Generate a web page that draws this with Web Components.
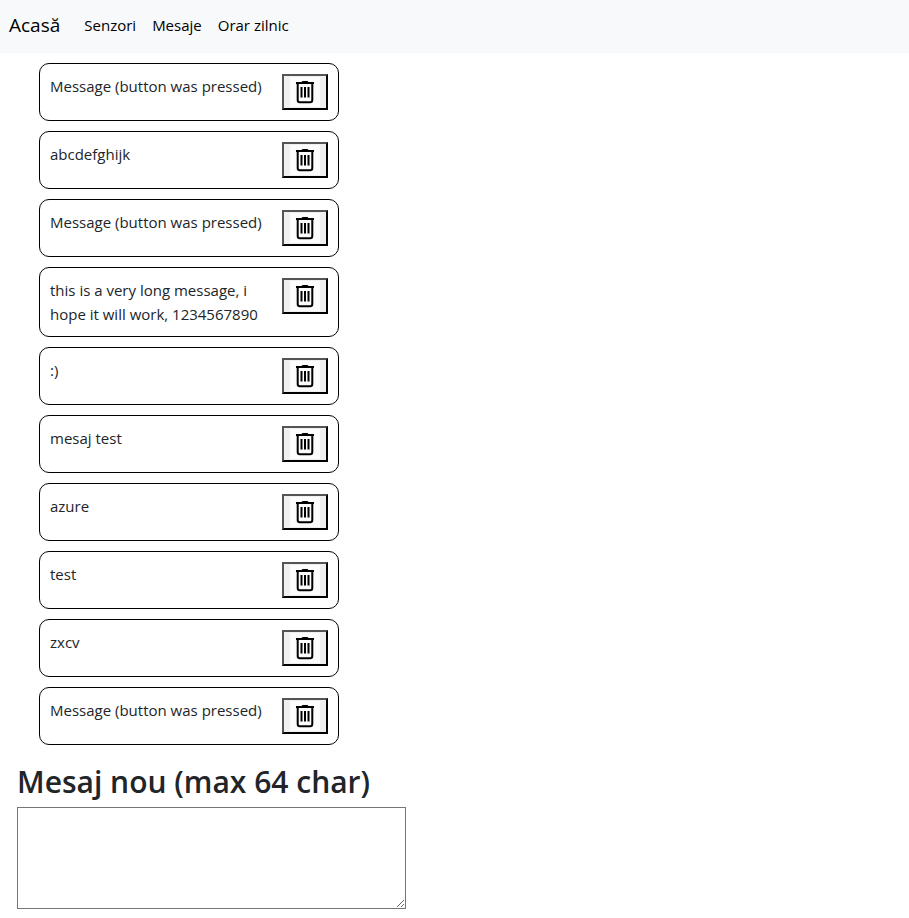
<!DOCTYPE html>
<html lang="ro">
<head>
<meta charset="utf-8">
<meta name="viewport" content="width=device-width, initial-scale=1">
<title>Mesaje</title>
<style>
body{margin:0;background:#fff;color:#212529;font:15px/24px "Segoe UI","Open Sans","Noto Sans",sans-serif}
</style>
</head>
<body>
<message-page></message-page>

<template id="nav-template">
<style>
:host{display:block;background:#f8f9fa}
nav{display:flex;align-items:center;min-height:53px;padding:0 9px 3px;box-sizing:border-box;gap:16px}
::slotted(a){color:#000;text-decoration:none}
::slotted(a[slot=brand]){font-size:19px;line-height:30px;margin-right:8px}
</style>
<nav><slot name="brand"></slot><slot></slot></nav>
</template>

<template id="item-template">
<style>
:host{display:flex;justify-content:space-between;align-items:flex-start;gap:8px;box-sizing:border-box;width:100%;max-width:300px;padding:10px;border:1px solid #000;border-radius:10px}
p{margin:0;flex:1;min-width:0}
button{flex:none;box-sizing:border-box;padding:1px 6px;border:2px outset #000;border-radius:0;background:#efefef;color:#000;font:inherit}
svg{display:block;width:30px;height:30px;background:#fcfcfc}
</style>
<p><slot></slot></p>
<button type="button" aria-label="Șterge mesajul">
<svg viewBox="0 0 30 30" fill="none" stroke="#000" stroke-width="2" aria-hidden="true">
<path d="M6 6H24"/>
<path d="M12 5.200L13 4.700H17L18 5.200" stroke-width="1.500"/>
<path d="M7.700 6.500V23Q7.700 25.200 9.900 25.200H20.100Q22.300 25.200 22.300 23V6.500"/>
<path d="M11.500 10V20.500M15 10V20.500M18.500 10V20.500"/>
</svg>
</button>
</template>

<template id="composer-template">
<style>
:host{display:block}
label{display:block;font-size:30px;line-height:38px;font-weight:600;margin:0 0 6px}
h2{margin:0;font:inherit}
textarea{display:block;box-sizing:border-box;width:389px;max-width:100%;height:102px;margin:0;padding:2px;border:1px solid #767676;border-radius:0;background:#fff;font:inherit;resize:both}
</style>
<h2><label for="text">Mesaj nou (max 64 char)</label></h2>
<textarea id="text" maxlength="64"></textarea>
</template>

<template id="page-template">
<style>
:host{display:block}
.messages{display:flex;flex-direction:column;gap:10px;padding:10px 39px 0}
message-composer{padding:18px 17px 9px}
</style>
<site-nav>
<a slot="brand" href="#acasa">Acasă</a>
<a href="#senzori">Senzori</a>
<a href="#mesaje">Mesaje</a>
<a href="#orar">Orar zilnic</a>
</site-nav>
<main>
<div class="messages">
<message-item>Message (button was pressed)</message-item>
<message-item>abcdefghijk</message-item>
<message-item>Message (button was pressed)</message-item>
<message-item>this is a very long message, i hope it will work, 1234567890</message-item>
<message-item>:)</message-item>
<message-item>mesaj test</message-item>
<message-item>azure</message-item>
<message-item>test</message-item>
<message-item>zxcv</message-item>
<message-item>Message (button was pressed)</message-item>
</div>
<message-composer></message-composer>
</main>
</template>

<script>
const define = (name, templateId) => customElements.define(name, class extends HTMLElement {
  constructor() {
    super();
    this.attachShadow({ mode: "open" })
      .append(document.getElementById(templateId).content.cloneNode(true));
  }
});
define("site-nav", "nav-template");
define("message-item", "item-template");
define("message-composer", "composer-template");
define("message-page", "page-template");
</script>
</body>
</html>
